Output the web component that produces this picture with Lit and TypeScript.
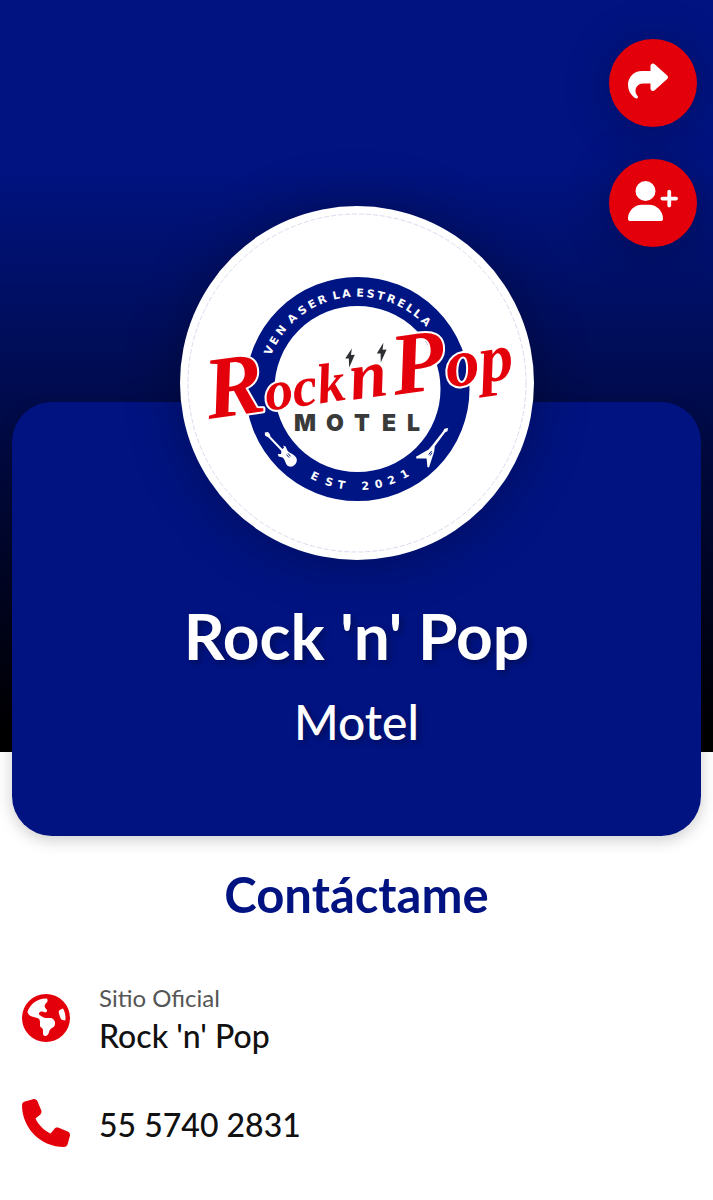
import { LitElement, html, css, svg } from "lit";
import { customElement } from "lit/decorators.js";

const ICONS = {
  share:
    "M307 34.8c-11.5 5.1-19 16.6-19 29.2v64H176C78.8 128 0 206.8 0 304C0 417.3 81.5 467.9 100.2 478.1c2.5 1.4 5.3 1.9 8.1 1.9c10.9 0 19.7-8.9 19.7-19.7c0-7.5-4.3-14.4-9.8-19.5C108.8 431.9 96 414.4 96 384c0-53 43-96 96-96h96v64c0 12.6 7.4 24.1 19 29.2s25 3 34.4-5.4l160-144c6.7-6.1 10.6-14.7 10.6-23.8s-3.8-17.7-10.6-23.8l-160-144c-9.4-8.5-22.9-10.6-34.4-5.4z",
  userPlus:
    "M96 128a128 128 0 1 1 256 0A128 128 0 1 1 96 128zM0 482.3C0 383.8 79.8 304 178.3 304h91.4C368.2 304 448 383.8 448 482.3c0 16.4-13.3 29.7-29.7 29.7H29.7C13.3 512 0 498.7 0 482.3zM504 312V248H440c-13.3 0-24-10.7-24-24s10.7-24 24-24h64V136c0-13.3 10.7-24 24-24s24 10.7 24 24v64h64c13.3 0 24 10.7 24 24s-10.7 24-24 24H552v64c0 13.3-10.7 24-24 24s-24-10.7-24-24z",
  globe:
    "M57.7 193l9.4 16.4c8.3 14.5 21.9 25.2 38 29.8L163 255.7c17.2 4.9 29 20.6 29 38.5v39.9c0 11 6.2 21 16 25.9s16 14.9 16 25.9v39c0 15.6 14.9 26.9 29.9 22.6c16.1-4.6 28.6-17.5 32.7-33.8l2.8-11.2c4.2-16.9 15.2-31.4 30.3-40l8.1-4.6c15-8.5 24.2-24.5 24.2-41.7v-8.3c0-12.7-5.1-24.9-14.1-33.9l-3.9-3.9c-9-9-21.2-14.1-33.9-14.1H257c-11.1 0-22.1-2.9-31.8-8.4l-34.5-19.7c-4.3-2.5-7.6-6.5-9.2-11.2c-3.2-9.6 1.1-20 10.2-24.5l5.9-3c6.6-3.3 14.3-3.9 21.3-1.5l23.2 7.7c8.2 2.7 17.2-.4 21.9-7.5c4.7-7 4.2-16.3-1.2-22.8l-13.6-16.3c-10-12-9.9-29.5 .3-41.3l15.7-18.3c8.8-10.3 10.2-25 3.5-36.7l-2.4-4.2c-3.5-.2-6.9-.3-10.4-.3C163.1 48 84.4 108.9 57.7 193zM464 256c0-36.8-9.6-71.4-26.4-101.5L412 164.8c-15.7 6.3-23.8 23.8-18.5 39.8l16.9 50.7c3.5 10.4 12 18.3 22.6 20.9l29.1 7.3c1.2-9 1.8-18.2 1.8-27.5zM0 256a256 256 0 1 1 512 0A256 256 0 1 1 0 256z",
  phone:
    "M164.9 24.6c-7.7-18.6-28-28.5-47.4-23.2l-88 24C12.1 30.2 0 46 0 64C0 311.4 200.6 512 448 512c18 0 33.8-12.1 38.6-29.5l24-88c5.3-19.4-4.6-39.7-23.2-47.4l-96-40c-16.3-6.8-35.2-2.1-46.3 11.6L304.7 368C234.3 334.7 177.3 277.7 144 207.3L193.3 167c13.7-11.2 18.4-30 11.6-46.3l-40-96z",
};

@customElement("brand-logo")
export class BrandLogo extends LitElement {
  static styles = css`
    :host { display: block; }
    .art { display: block; width: 100%; height: auto; }
    .ring-text { font: 700 11px "DejaVu Sans", sans-serif; fill: #fff; }
    .motel { font: 900 23px Inter, "Liberation Sans", sans-serif; fill: #3a3a3a; }
    .script {
      font-family: "Liberation Serif", serif;
      font-style: italic;
      font-weight: 700;
      fill: #e4000b;
      stroke: #fff;
      stroke-width: 4px;
      stroke-linejoin: round;
      paint-order: stroke;
    }
    .cap { font-size: 88px; }
    .low { font-size: 56px; }
    .mid { font-size: 68px; }
  `;

  render() {
    return html`<svg class="art" viewBox="182 206 354 354" role="img" aria-label="Rock 'n' Pop Motel">
      ${svg`
      <defs>
        <path id="upper" d="M268 373A93 93 0 0 1 451 373" />
        <path id="lower" d="M272 439.5A101 101 0 0 0 447 439.5" />
      </defs>
      <circle cx="359" cy="383" r="169" fill="none" stroke="#c9cbe4" stroke-width=".7" stroke-dasharray="5 2" />
      <circle cx="359.5" cy="389" r="97.5" fill="none" stroke="#001584" stroke-width="29" />
      <text class="ring-text"><textPath href="#upper"><tspan x="18 29 40 51 56 65 69 80 90 100 105 114 124 128 138 148 158 169 179 188 198">VEN A SER LA ESTRELLA</tspan></textPath></text>
      <text class="ring-text"><textPath href="#lower"><tspan x="56 72 85 98 110 124 138 153">EST 2021</tspan></textPath></text>

      <g fill="#fff">
        <path d="M267 435.5L266.8 432.6 270 432 272 434.5 272.4 436.5 284.4 449 286 447.8 285.2 445.6 287.6 446.6 289.4 450.6C290.5 453 297 454.5 298.6 458.6C299.8 463 296 467.4 291.5 466.6C287 465.6 287.5 459.5 284.6 457.6L280.6 456.4 279.8 454 283 454 283.4 451 270.8 437.8Z" />
        <path d="M450.2 428L449.4 431.2 447 432.6 436.8 446.2 436.2 451.6 431 467.6 429.4 467 428.6 458.4 418.4 458.6 418 456.8 430.6 449.6 434 445.4 445 431.6 446.4 428.8Z" />
      </g>
      <path d="M288.4 454.6l2.8 3M290 453.4l2.6 3M430.6 454.6l3-3.6M432 455.6l2-3" stroke="#001584" fill="none" />

      <text class="script" transform="translate(211 419) rotate(-8)"><tspan class="cap">R</tspan><tspan class="low">ock</tspan></text>
      <text class="script" transform="translate(354 400) rotate(-8)"><tspan class="mid">n</tspan></text>
      <text class="script" transform="translate(397 395) rotate(-8)"><tspan class="cap">P</tspan><tspan class="mid">op</tspan></text>
      <g fill="#2d2f33">
        <path d="M353.8 348.4L347.2 358.6 350.8 358.4 351.2 367.4 356.8 354.8 353 355Z" />
        <path d="M385.4 342.8L378.8 353.6 382.6 353.4 382.8 362.4 388.6 349.6 384.6 349.8Z" />
      </g>
      <text class="motel" y="431" x="296 328 356 384 409">MOTEL</text>
      `}
    </svg>`;
  }
}

@customElement("app-root")
export class AppRoot extends LitElement {
  static styles = css`
    :host {
      display: block;
      min-height: 100vh;
      background: #fff;
      color: #111;
      font-family: Lato, sans-serif;
      --blue: #001381;
      --red: #e4000b;
    }
    .hero {
      position: relative;
      padding: 206px 12px 0;
      background: linear-gradient(var(--blue) 22%, #000 98%) top / 100% calc(100% - 84px) no-repeat;
    }
    .actions {
      position: absolute;
      top: 39px;
      right: 16px;
      display: grid;
      gap: 32px;
    }
    .round {
      display: grid;
      place-items: center;
      width: 88px;
      height: 88px;
      padding: 0 0 4px;
      border: 0;
      border-radius: 50%;
      background: var(--red);
      color: #fff;
      box-shadow: 0 4px 48px rgba(0, 0, 0, 0.24);
      cursor: pointer;
    }
    .glyph { display: block; width: 50px; height: 40px; fill: currentColor; }
    .avatar {
      position: relative;
      z-index: 1;
      width: 354px;
      margin: 0 auto -158px;
      border-radius: 50%;
      background: #fff;
      box-shadow: 0 0 56px rgba(0, 0, 0, 0.3);
    }
    .card {
      padding: 198px 24px 84px;
      border-radius: 40px;
      background: var(--blue);
      color: #fff;
      text-align: center;
      text-shadow: 3px 3px 6px rgba(0, 0, 0, 0.3);
      box-shadow: 0 4px 16px rgba(0, 0, 0, 0.2);
    }
    .name { margin: 0; font-size: 64px; line-height: 72px; font-weight: 700; }
    .kind { margin: 20px 0 0; font-size: 48px; line-height: 60px; font-weight: 500; }
    .section-title {
      margin: 0;
      padding: 28px 24px 0;
      color: var(--blue);
      font-size: 49px;
      line-height: 60px;
      font-weight: 700;
      text-align: center;
    }
    .contacts { margin: 0; padding: 48px 22px 24px; list-style: none; display: grid; gap: 14px; }
    .contact {
      display: flex;
      align-items: center;
      gap: 29px;
      min-height: 91px;
      color: inherit;
      text-decoration: none;
    }
    .mark { flex: none; width: 48px; height: 48px; fill: var(--red); }
    .lines { display: grid; padding-top: 4px; }
    .label { color: #555; font-size: 24px; line-height: 32px; }
    .value { font-size: 32px; line-height: 44px; font-weight: 500; }
  `;

  render() {
    return html`
      <header class="hero">
        <div class="actions">
          <button class="round" type="button" aria-label="Compartir">
            <svg class="glyph" viewBox="0 0 512 512" preserveAspectRatio="xMinYMid"><path d=${ICONS.share} /></svg>
          </button>
          <button class="round" type="button" aria-label="Agregar contacto">
            <svg class="glyph" viewBox="0 0 640 512"><path d=${ICONS.userPlus} /></svg>
          </button>
        </div>
        <brand-logo class="avatar"></brand-logo>
        <div class="card">
          <h1 class="name">Rock 'n' Pop</h1>
          <p class="kind">Motel</p>
        </div>
      </header>
      <main>
        <h2 class="section-title">Contáctame</h2>
        <ul class="contacts">
          <li>
            <a class="contact" href="#sitio">
              <svg class="mark" viewBox="0 0 512 512" aria-hidden="true"><path d=${ICONS.globe} /></svg>
              <span class="lines"><span class="label">Sitio Oficial</span><span class="value">Rock 'n' Pop</span></span>
            </a>
          </li>
          <li>
            <a class="contact" href="tel:5557402831">
              <svg class="mark" viewBox="0 0 512 512" aria-hidden="true"><path d=${ICONS.phone} /></svg>
              <span class="lines"><span class="value">55 5740 2831</span></span>
            </a>
          </li>
        </ul>
      </main>
    `;
  }
}
